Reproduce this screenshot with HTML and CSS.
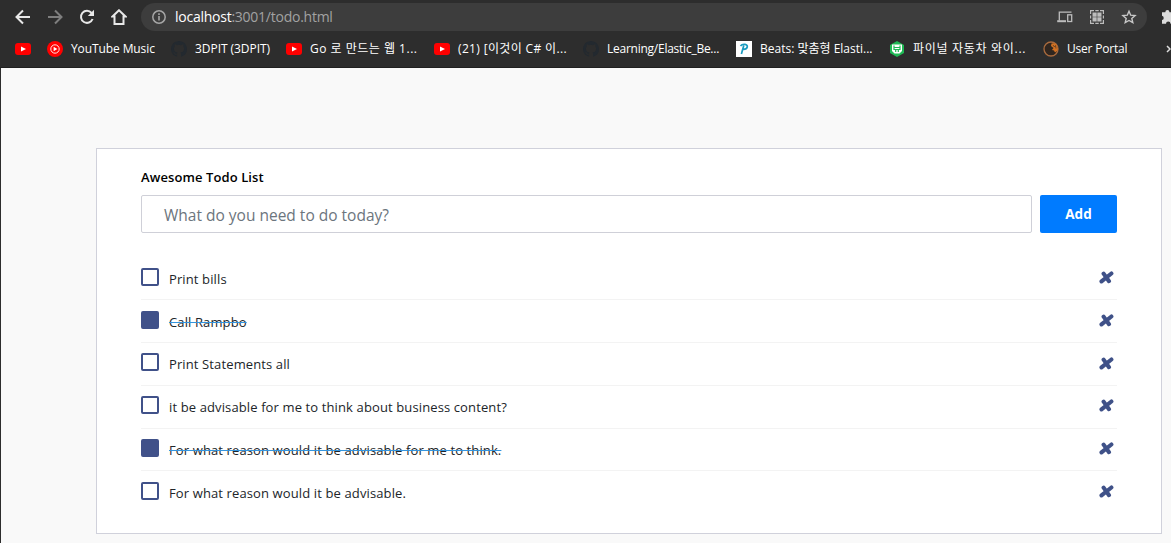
FILE: index.html
```html
<!DOCTYPE html>
<html lang="ko">
<head>
<meta charset="utf-8">
<title>Awesome Todo List</title>
<link rel="stylesheet" href="styles.css">
</head>
<body>
<svg width="0" height="0" class="sprites">
  <symbol id="yt" viewBox="0 0 16 16"><rect y="2" width="16" height="12" rx="3" fill="#f00"/><path d="M6 5.4 11 8 6 10.6Z" fill="#fff"/></symbol>
  <symbol id="gh" viewBox="0 0 16 16"><path fill="#23292f" d="M8 0C3.58 0 0 3.58 0 8c0 3.54 2.29 6.53 5.47 7.59.4.07.55-.17.55-.38v-1.49c-2.01.37-2.53-.49-2.69-.94-.09-.23-.48-.94-.82-1.13-.28-.15-.68-.52-.01-.53.63-.01 1.08.58 1.23.82.72 1.21 1.87.87 2.33.66.07-.52.28-.87.51-1.07-1.78-.2-3.64-.89-3.64-3.95 0-.87.31-1.59.82-2.15-.08-.2-.36-1.02.08-2.12 0 0 .67-.21 2.2.82a7.6 7.6 0 0 1 4 0c1.53-1.04 2.2-.82 2.2-.82.44 1.1.16 1.92.08 2.12.51.56.82 1.27.82 2.15 0 3.07-1.87 3.75-3.65 3.95.29.25.54.73.54 1.48v2.2c0 .21.15.46.55.38A8 8 0 0 0 16 8c0-4.42-3.58-8-8-8Z"/></symbol>
  <symbol id="x" viewBox="0 0 15 13"><path d="M4.600 2.600 10 10.200M12.400 2.500 2.500 10.400" fill="none" stroke="#3f5188" stroke-width="4.100" stroke-linecap="round"/></symbol>
</svg>
<header class="browser">
  <div class="toolbar">
    <svg class="nav" viewBox="0 0 16 16"><path d="M15 8H2M8 1.5 1.5 8 8 14.5" fill="none" stroke="#e8e8e8" stroke-width="2"/></svg>
    <svg class="nav" viewBox="0 0 16 16"><path d="M1 8h13M8 1.5 14.500 8 8 14.500" fill="none" stroke="#7e7e7e" stroke-width="2"/></svg>
    <svg class="nav" viewBox="0 0 16 16"><path d="M13.6 10A6 6 0 1 1 12.600 4" fill="none" stroke="#e8e8e8" stroke-width="2"/><path d="M15 .8V7H8.800Z" fill="#e8e8e8"/></svg>
    <svg class="nav" viewBox="0 0 16 16"><path d="M8 1.300 1.500 7.500H3.500V15H12.500V7.500H14.500Z" fill="none" stroke="#e8e8e8" stroke-width="2"/></svg>
    <div class="address">
      <svg class="info" viewBox="0 0 14 14"><circle cx="7" cy="7" r="6.200" fill="none" stroke="#a6a6a6" stroke-width="1.500"/><path d="M7 6v4.500M7 3.300v1.600" stroke="#a6a6a6" stroke-width="1.600"/></svg>
      <span class="url"><b>localhost</b>:3001/todo.html</span>
      <span class="actions">
        <svg width="16" height="16" viewBox="0 0 16 16" fill="none" stroke="#bdbdbd" stroke-width="1.300"><path d="M14.500 3.200H2.300V11.500"/><path d="M.2 12.200H9" stroke-width="2"/><rect x="10.700" y="5.800" width="4" height="6.700"/></svg>
        <svg width="16" height="16" viewBox="0 0 16 16" fill="none" stroke="#bdbdbd" stroke-width="1.200"><path d="M1.600 5V1.600H5M6.300 1.600h3.400M11 1.600h3.400V5M14.400 6.500v3M14.400 11v3.400H11M9.700 14.400H6.300M5 14.400H1.600V11M1.600 9.500v-3"/><path d="M3.500 3.500h4.200v4.200H3.500ZM8.300 3.500h4.200v4.200H8.300ZM3.500 8.300h4.200v4.200H3.500ZM8.300 8.300h4.200v4.200H8.300Z" fill="#bdbdbd" stroke="none"/></svg>
        <svg width="16" height="16" viewBox="0 0 16 16" fill="none" stroke="#c8c8c8" stroke-width="1.400"><path d="m8 2.200 1.700 4 4.400.4-3.300 2.900 1 4.200L8 11.500l-3.800 2.200 1-4.200L1.900 6.600l4.400-.4Z"/></svg>
      </span>
    </div>
    <svg class="puzzle" viewBox="0 0 16 16"><path fill="#dcdcdc" d="M1 3.200h3.300A2.100 2.100 0 0 1 8.500 3.200H13v4a2.200 2.200 0 0 1 0 4.500v3H9.500a2.200 2.200 0 0 0-4.500 0H1v-3.600a2.200 2.200 0 0 0 0-4.300Z"/></svg>
  </div>
  <nav class="bookmarks">
    <a class="bm bm-yt"><svg><use href="#yt"/></svg></a>
    <a class="bm bm-music"><svg viewBox="0 0 16 16"><circle cx="8" cy="8" r="8" fill="#f00"/><circle cx="8" cy="8" r="4.200" fill="none" stroke="#fff" stroke-width=".9"/><path d="M6.600 5.700 10.400 8l-3.800 2.300Z" fill="#fff"/></svg><span>YouTube Music</span></a>
    <a class="bm bm-pit"><svg><use href="#gh"/></svg><span>3DPIT (3DPIT)</span></a>
    <a class="bm bm-go"><svg><use href="#yt"/></svg><span>Go 로 만드는 웹 1...</span></a>
    <a class="bm bm-cs"><svg><use href="#yt"/></svg><span>(21) [이것이 C# 이...</span></a>
    <a class="bm bm-learn"><svg><use href="#gh"/></svg><span>Learning/Elastic_Be...</span></a>
    <a class="bm bm-beats"><svg viewBox="0 0 16 16"><path d="M0 0h16v16H0Z" fill="#fff"/><path d="M4.500 5Q6 3 9 3.400c3.600.5 3 4.600-1.600 5M7.800 4.500Q6.500 9 5.400 13" fill="none" stroke="#1a9bc0" stroke-width="1.700"/></svg><span>Beats: 맞춤형 Elasti...</span></a>
    <a class="bm bm-car"><svg viewBox="0 0 16 16"><path d="m8 0 7 4v8l-7 4-7-4V4Z" fill="#20b955"/><path d="M3 3.500h10v6.500l-2.500 2.500h-5L3 10Z" fill="#fff"/><path d="M5 4.500v4h6V4.500M5 6.500h6M6.700 8.500v2.500M9.300 8.500v2.500" fill="none" stroke="#20b955" stroke-width="1.200"/></svg><span>파이널 자동차 와이...</span></a>
    <a class="bm bm-user"><svg viewBox="0 0 16 16"><circle cx="8" cy="8" r="7" fill="#30261f" stroke="#a96b3e" stroke-width="1.300"/><path d="M8.500 2.500q3-1 5 1l1.500 4.500q-1 3-3 3.500l-1-2-2-.5 1.500-2-2.500-2Z" fill="#d27122"/><path d="m10 4 1.500 2 1-1.500.5 3" fill="none" stroke="#5b3820" stroke-width=".8"/></svg><span>User Portal</span></a>
    <svg class="more" viewBox="0 0 6 8"><path d="m1 1 3 3-3 3" fill="none" stroke="#ddd" stroke-width="1.500"/></svg>
  </nav>
</header>
<main class="page">
  <section class="card">
    <h1><span>Awesome Todo List</span></h1>
    <form class="entry">
      <div class="field"><span>What do you need to do today?</span></div>
      <div class="add">Add</div>
    </form>
    <ul class="todos">
      <li><i class="box"></i><span>Print bills</span><svg><use href="#x"/></svg></li>
      <li class="done"><i class="box"></i><span>Call Rampbo</span><svg><use href="#x"/></svg></li>
      <li><i class="box"></i><span>Print Statements all</span><svg><use href="#x"/></svg></li>
      <li><i class="box"></i><span>it be advisable for me to think about business content?</span><svg><use href="#x"/></svg></li>
      <li class="done"><i class="box"></i><span>For what reason would it be advisable for me to think.</span><svg><use href="#x"/></svg></li>
      <li><i class="box"></i><span>For what reason would it be advisable.</span><svg><use href="#x"/></svg></li>
    </ul>
  </section>
</main>
</body>
</html>
```
FILE: styles.css
```css
* { box-sizing: border-box; }
body {
  margin: 0;
  height: 543px;
  overflow: hidden;
  background: #f9f9f9;
  color: #212529;
  font-family: "Open Sans", "Noto Sans CJK KR", sans-serif;
}
svg { flex: none; display: block; }
.sprites { position: absolute; }

.browser {
  height: 68px;
  overflow: hidden;
  background: #2d2d2d;
  border-bottom: 1px solid #202020;
}
.toolbar {
  display: flex;
  align-items: center;
  height: 34px;
  padding-left: 15px;
}
.nav { width: 16px; height: 16px; margin-right: 16px; }
.address {
  display: flex;
  align-items: center;
  flex: none;
  width: 1006px;
  height: 28px;
  margin-left: -2px;
  padding: 0 10px 0 11px;
  border-radius: 14px;
  background: #3d3d3d;
}
.info { width: 14px; height: 14px; margin-right: 9px; }
.url { color: #a2a2a2; font-size: 14px; line-height: 20px; letter-spacing: -0.25px; white-space: nowrap; }
.url b { color: #fff; font-weight: 400; }
.actions { display: flex; gap: 16px; margin-left: auto; }
.puzzle { width: 16px; height: 16px; margin-left: 14px; }

.bookmarks {
  display: flex;
  align-items: center;
  height: 30px;
  padding-left: 15px;
}
.bm {
  display: flex;
  align-items: center;
  flex: none;
  gap: 8px;
  color: #fff;
  font-size: 12px;
  line-height: 18px;
  white-space: nowrap;
}
.bm svg { width: 16px; height: 16px; }
.bm-yt { width: 32px; }
.bm-music { width: 124px; letter-spacing: -0.1px; }
.bm-pit { width: 115px; letter-spacing: -0.05px; }
.bm-go { width: 148px; letter-spacing: 0.5px; }
.bm-cs { width: 149px; letter-spacing: 0.35px; }
.bm-learn { width: 153px; letter-spacing: -0.25px; }
.bm-beats { width: 153px; }
.bm-car { width: 154px; letter-spacing: 0.7px; }
.bm-user { width: 123px; letter-spacing: -0.2px; }
.more { width: 6px; height: 8px; }

.page {
  height: 475px;
  padding: 80px 9px 9px 95px;
  border-left: 1px solid #2d2d2d;
}
.card {
  height: 386px;
  padding: 18px 44px 0;
  border: 1px solid #d0d1db;
  background: #fff;
}
h1 {
  margin: 0 0 7px;
  color: #000;
  font-size: 13px;
  line-height: 21px;
  font-weight: 600;
  letter-spacing: 0.1px;
}
.entry { display: flex; gap: 8px; margin: 0; }
.field {
  flex: 1;
  height: 38px;
  padding: 0 22px;
  border: 1px solid #cfd0d8;
  border-radius: 2px;
  color: #6c757d;
  font-size: 15.5px;
  line-height: 38px;
}
.add {
  width: 77px;
  height: 38px;
  border-radius: 2px;
  background: #007bff;
  color: #fff;
  font-size: 13.5px;
  font-weight: 700;
  line-height: 38px;
  text-align: center;
}
.todos { margin: 24.6px 0 0; padding: 0; list-style: none; }
.todos li {
  display: flex;
  align-items: flex-start;
  height: 42.75px;
  padding-top: 10.2px;
  border-bottom: 1px solid #f3f3f3;
  font-size: 13px;
  line-height: 22px;
  letter-spacing: 0.12px;
}
.todos li:last-child { border-bottom: 0; }
.todos li > svg { width: 15px; height: 13px; margin: 3.3px 3px 0 auto; }
.box {
  width: 18px;
  height: 18px;
  margin-right: 10px;
  border: 2px solid #405189;
  border-radius: 2px;
}
.done .box { background: #405189; }
.done span { text-decoration: line-through 1px #3595dd; }
```
